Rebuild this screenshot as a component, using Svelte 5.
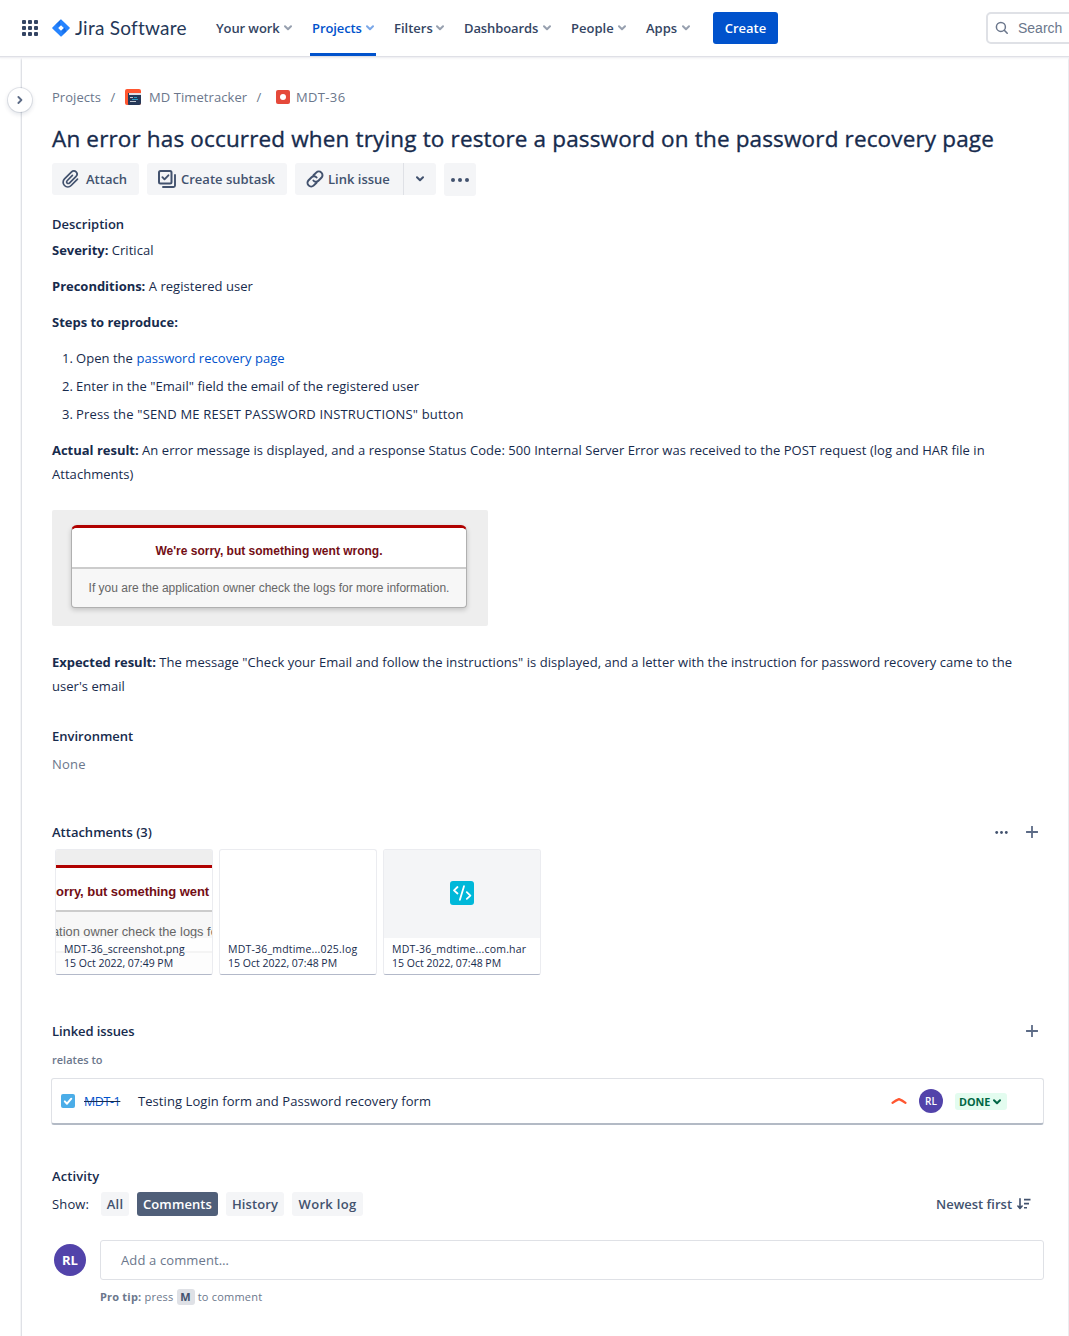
<script>
  const nav = [
    { label: 'Your work', key: 'work' },
    { label: 'Projects', key: 'projects', active: true },
    { label: 'Filters', key: 'filters' },
    { label: 'Dashboards', key: 'dash' },
    { label: 'People', key: 'people' },
    { label: 'Apps', key: 'apps' }
  ];
  const tabs = [
    { label: 'All', key: 'all' },
    { label: 'Comments', key: 'comments', selected: true },
    { label: 'History', key: 'history' },
    { label: 'Work log', key: 'worklog' }
  ];
  const files = [
    { name: 'MDT-36_screenshot.png', date: '15 Oct 2022, 07:49 PM', kind: 'image' },
    { name: 'MDT-36_mdtime...025.log', date: '15 Oct 2022, 07:48 PM', kind: 'log' },
    { name: 'MDT-36_mdtime...com.har', date: '15 Oct 2022, 07:48 PM', kind: 'har' }
  ];
  const dots = [0, 1, 2, 3, 4, 5, 6, 7, 8];
</script>

{#snippet chevron()}
  <svg class="chev" width="8" height="6" viewBox="0 0 8 6"><path d="M1 1.2 4 4.2 7 1.2" fill="none" stroke="currentColor" stroke-width="2" stroke-linecap="round" stroke-linejoin="round" /></svg>
{/snippet}

{#snippet plus()}
  <svg width="12" height="12" viewBox="0 0 12 12"><path d="M6 .5v11M.5 6h11" stroke="#5c6b86" stroke-width="1.8" stroke-linecap="round" /></svg>
{/snippet}

<div class="page">
  <header>
    <svg class="switcher" width="16" height="16" viewBox="0 0 16 16">
      {#each dots as d}
        <rect x={(d % 3) * 6} y={Math.floor(d / 3) * 6} width="4" height="4" rx="1" fill="#344563" />
      {/each}
    </svg>
    <div class="logo">
      <svg width="18" height="18" viewBox="0 0 18 18">
        <defs>
          <linearGradient id="ga" x1="1" y1="0" x2="0.4" y2="1"><stop offset="0" stop-color="#0052cc" /><stop offset="1" stop-color="#2684ff" /></linearGradient>
        </defs>
        <path d="M9 .2 17.4 8.3a1 1 0 0 1 0 1.4L9 17.8.6 9.7a1 1 0 0 1 0-1.4Z" fill="#2684ff" />
        <path d="M9 .2Q6.9 3.2 9 6.3L5.6 9.4 3.5 5.6Z" fill="url(#ga)" opacity=".75" />
        <path d="M9 17.8q2.1-3 0-6.1L12.4 8.6l2.1 3.8Z" fill="url(#ga)" opacity=".75" />
        <path d="M9 6.2 11.8 9 9 11.8 6.200 9Z" fill="#fff" />
      </svg>
      <span class="wordmark">Jira Software</span>
    </div>
    <nav>
      {#each nav as item}
        <a class="nav-item {item.key}" class:active={item.active}><span>{item.label}</span>{@render chevron()}</a>
      {/each}
    </nav>
    <button class="create">Create</button>
    <div class="search">
      <svg width="14" height="14" viewBox="0 0 14 14"><circle cx="5.9" cy="5.9" r="4.5" fill="none" stroke="#6b778c" stroke-width="1.5" /><path d="m9.300 9.300 2.900 2.900" stroke="#6b778c" stroke-width="1.6" stroke-linecap="round" /></svg>
      <span>Search</span>
    </div>
  </header>

  <div class="body">
    <aside>
      <button class="expand">
        <svg width="6" height="8" viewBox="0 0 6 8"><path d="M1.4 1 4.4 4 1.4 7" fill="none" stroke="#5c6b86" stroke-width="1.8" stroke-linecap="round" stroke-linejoin="round" /></svg>
      </button>
    </aside>
    <main>
      <div class="crumbs">
        <span class="c1">Projects</span><span class="slash">/</span>
        <svg class="project-icon" width="16" height="16" viewBox="0 0 16 16">
          <rect width="16" height="16" rx="2" fill="#ff5630" />
          <path d="M3 4h13v10a2 2 0 0 1-2 2H4a1 1 0 0 1-1-1Z" fill="#253858" />
          <path d="M4 4h12v2H4Z" fill="#dfe1e6" />
          <path d="M5 8.5h3M5 12.5h6" stroke="#c1c7d0" /><path d="M7 10.5h6M9 8.5h3" stroke="#2a9fc4" />
        </svg>
        <span class="c2">MD Timetracker</span><span class="slash s2">/</span>
        <svg class="bug" width="14" height="14" viewBox="0 0 14 14"><rect width="14" height="14" rx="2" fill="#e5493a" /><circle cx="7" cy="7" r="3" fill="#fff" /></svg>
        <span class="c3">MDT-36</span>
      </div>

      <h1>An error has occurred when trying to restore a password on the password recovery page</h1>

      <div class="actions">
        <button class="btn attach">
          <svg width="18" height="20" viewBox="0 0 18 20"><path d="M10.600 4.500 4.800 10.300C3.400 11.700 3.300 13.300 4.300 14.300s2.700.9 4-.4l6.900-6.900c1.100-1.100 1.200-2.500.3-3.400M12.100 7.700 7.500 12.300" fill="none" stroke="none" /><g transform="translate(9 10) rotate(45)" fill="none" stroke="#42526e" stroke-width="1.700" stroke-linecap="round"><path d="M4.700-4.500V4.500a4.700 4.700 0 0 1-9.400 0V-5.500a3.200 3.200 0 0 1 6.400 0V4a1.600 1.600 0 0 1-3.200 0V-3.500" /></g></svg>
          <span>Attach</span>
        </button>
        <button class="btn subtask">
          <svg width="18" height="18" viewBox="0 0 18 18"><rect x="1" y="1" width="12.5" height="12.5" rx="1.5" fill="none" stroke="#42526e" stroke-width="2" /><path d="m4.4 7.2 2.1 2.1 3.9-4M17 5v10.5a1.5 1.5 0 0 1-1.5 1.5H5" fill="none" stroke="#42526e" stroke-width="1.9" stroke-linecap="round" stroke-linejoin="round" /></svg>
          <span>Create subtask</span>
        </button>
        <div class="split">
          <button class="btn link">
            <svg width="18" height="18" viewBox="0 0 18 18"><g fill="none" stroke="#42526e" stroke-width="2" stroke-linecap="round"><path d="M7.5 5.3 10.2 2.6a3.6 3.6 0 0 1 5.2 5.2l-3 3c-1.5 1.5-3.8 1.3-5-.3" /><path d="M10.5 12.7 7.8 15.4a3.6 3.6 0 0 1-5.2-5.2l3-3c1.5-1.5 3.8-1.3 5 .3" /></g></svg>
            <span>Link issue</span>
          </button>
          <button class="btn caret">{@render chevron()}</button>
        </div>
        <button class="btn more">
          <svg width="18" height="4" viewBox="0 0 18 4"><g fill="#42526e"><circle cx="2" cy="2" r="2" /><circle cx="9" cy="2" r="2" /><circle cx="16" cy="2" r="2" /></g></svg>
        </button>
      </div>

      <h2 class="h-desc">Description</h2>
      <section class="description">
        <p><b>Severity:</b> Critical</p>
        <p><b>Preconditions:</b> A registered user</p>
        <p><b>Steps to reproduce:</b></p>
        <ol>
          <li><i>1.</i>Open the <a>password recovery page</a></li>
          <li><i>2.</i>Enter in the "Email" field the email of the registered user</li>
          <li class="caps"><i>3.</i>Press the "SEND ME RESET PASSWORD INSTRUCTIONS" button</li>
        </ol>
        <p><b>Actual result:</b> An error message is displayed, and a response Status Code: 500 Internal Server Error was received to the POST request (log and HAR file in<br />Attachments)</p>
        <figure>
          <div class="dialog">
            <div class="dialog-title"><span>We're sorry, but something went wrong.</span></div>
            <div class="dialog-text"><span>If you are the application owner check the logs for more information.</span></div>
          </div>
        </figure>
        <p><b>Expected result:</b> The message "Check your Email and follow the instructions" is displayed, and a letter with the instruction for password recovery came to the<br />user's email</p>
      </section>

      <h2 class="h-env">Environment</h2>
      <div class="none">None</div>

      <div class="section-head att-head">
        <h2>Attachments (3)</h2>
        <div class="tools">
          <svg width="13" height="3" viewBox="0 0 13 3"><g fill="#42526e"><circle cx="1.7" cy="1.5" r="1.4" /><circle cx="6.5" cy="1.5" r="1.4" /><circle cx="11.3" cy="1.5" r="1.4" /></g></svg>
          {@render plus()}
        </div>
      </div>
      <div class="files">
        {#each files as f}
          <div class="file {f.kind}">
            {#if f.kind === 'image'}
              <div class="thumb">
                <div class="thumb-title">orry, but something went</div>
                <div class="thumb-text">ation owner check the logs fo</div>
              </div>
            {:else if f.kind === 'har'}
              <div class="code">
                <svg width="24" height="24" viewBox="0 0 24 24"><rect width="24" height="24" rx="3" fill="#00b8d9" /><path d="M7.500 6 4 9.300l3.500 3.200M16.800 11.200l3.600 3.400-3.600 3.200M14 5.200 9.900 18.800" fill="none" stroke="#fff" stroke-width="1.8" stroke-linecap="round" stroke-linejoin="round" /></svg>
              </div>
            {/if}
            <div class="caption"><div class="name">{f.name}</div><div class="date">{f.date}</div></div>
          </div>
        {/each}
      </div>

      <div class="section-head link-head">
        <h2>Linked issues</h2>
        <div class="tools">{@render plus()}</div>
      </div>
      <div class="relates">relates to</div>
      <div class="issue">
        <svg width="14" height="14" viewBox="0 0 14 14"><rect width="14" height="14" rx="2" fill="#4bade8" /><path d="m3.800 7.400 2.200 2.300 4.300-5" fill="none" stroke="#fff" stroke-width="2" stroke-linecap="round" stroke-linejoin="round" /></svg>
        <span class="key">MDT-1</span>
        <span class="summary">Testing Login form and Password recovery form</span>
        <svg class="prio" width="16" height="8" viewBox="0 0 16 8"><path d="M1.500 5.900Q5 3.200 8 2.100q3 1.100 6.500 3.800" fill="none" stroke="#ff5630" stroke-width="2.200" stroke-linecap="round" stroke-linejoin="round" /></svg>
        <span class="avatar small">RL</span>
        <span class="status"><span>DONE</span>{@render chevron()}</span>
      </div>

      <h2 class="h-act">Activity</h2>
      <div class="show">
        <span class="label">Show:</span>
        {#each tabs as t}
          <button class="tab {t.key}" class:selected={t.selected}>{t.label}</button>
        {/each}
        <div class="sort">
          <span>Newest first</span>
          <svg width="14" height="12" viewBox="0 0 14 12"><path d="M3 .8v9.400M.9 8 3 10.400 5.100 8" fill="none" stroke="#42526e" stroke-width="1.600" stroke-linecap="round" stroke-linejoin="round" /><path d="M7 1.600h6.500M7 5.600h5M7 9.800h3" stroke="#42526e" stroke-width="1.600" /></svg>
        </div>
      </div>
      <div class="comment">
        <span class="avatar">RL</span>
        <div class="field"><span>Add a comment…</span></div>
      </div>
      <div class="tip"><b>Pro tip:</b> press <kbd>M</kbd> to comment</div>
    </main>
  </div>
</div>

<style>
  :global(body) { margin: 0; background: #fff; overflow: hidden; }
  .page {
    width: 1069px; height: 1336px; overflow: hidden; background: #fff;
    display: flex; flex-direction: column;
    font-family: "Open Sans", "Noto Sans", sans-serif; font-size: 13px; color: #172b4d;
  }
  .page * { box-sizing: border-box; }
  svg { display: block; flex: none; }
  button { font: inherit; border: 0; padding: 0; margin: 0; color: inherit; }
  span, h1, h2 { white-space: nowrap; }

  header {
    height: 56px; flex: none; display: flex; align-items: center; padding-left: 22px;
    box-shadow: 0 1px 0 #dfe0e6, 0 2px 1px #f0f0f4, 0 3px 2px #f8f8fa; position: relative; z-index: 1;
  }
  .logo { display: flex; align-items: center; margin-left: 14px; width: 158px; flex: none; }
  .wordmark { font-family: Lato, sans-serif; font-size: 19px; line-height: 24px; color: #253858; margin: -1px 0 0 5px; letter-spacing: .25px; }
  nav { display: flex; height: 56px; gap: 16px; width: 503px; flex: none; padding-left: 4px; }
  .nav-item { height: 56px; display: flex; align-items: center; justify-content: space-between; padding: 0 2px; font-weight: 600; color: #344563; border-bottom: 3px solid transparent; border-top: 3px solid transparent; flex: none; }
  .nav-item .chev { color: #97a0af; }
  .nav-item.active { color: #0052cc; border-bottom-color: #0052cc; }
  .active .chev { color: #7aa7e8; }
  .work { width: 80px; letter-spacing: -.1px; }
  .projects { width: 66px; letter-spacing: -.1px; }
  .filters { width: 54px; }
  .dash { width: 91px; letter-spacing: -.1px; }
  .people { width: 59px; }
  .apps { width: 48px; }
  .create { width: 65px; height: 32px; border-radius: 3px; background: #0052cc; color: #fff; font-weight: 600; flex: none; }
  .search { margin-left: 208px; width: 160px; height: 32px; flex: none; border: 2px solid #dfe1e6; border-radius: 5px; display: flex; align-items: center; padding-left: 7px; gap: 9px; font-family: "Liberation Sans", sans-serif; font-size: 14px; color: #6b778c; }

  .body { flex: 1; display: flex; }
  aside { width: 22px; border-right: 1px solid #dfe1e6; box-shadow: inset -1px 0 0 #f4f5f7; padding: 32px 0 0 8px; flex: none; }
  .expand { width: 24px; height: 24px; border-radius: 50%; background: #fff; box-shadow: 0 0 0 1px rgba(9,30,66,.1), 0 2px 4px 1px rgba(9,30,66,.1); display: flex; align-items: center; justify-content: center; position: relative; }
  main { width: 1047px; flex: none; padding: 30px 24px 0 30px; border-right: 1px solid #ebecf0; display: flex; flex-direction: column; }

  .crumbs { display: flex; align-items: center; height: 22px; color: #6b778c; }
  .slash { margin: 0 9px; width: 6px; text-align: center; }
  .c1 { width: 49px; letter-spacing: .05px; }
  .c2 { width: 99px; margin-left: 8px; letter-spacing: .08px; }
  .s2 { margin-right: 14px; margin-left: 8px; }
  .c3 { margin-left: 6px; letter-spacing: .35px; }

  h1 { margin: 17px 0 0; height: 28px; line-height: 28px; font-size: 22.5px; font-weight: 400; letter-spacing: .155px; -webkit-text-stroke: .35px #172b4d; }
  .actions { display: flex; gap: 8px; margin-top: 10px; height: 33px; }
  .btn { height: 32px; background: #f4f5f7; border-radius: 3px; display: flex; align-items: center; color: #42526e; font-weight: 600; }
  .attach { width: 87px; padding-left: 10px; gap: 6px; }
  .subtask { width: 140px; padding-left: 11px; gap: 5px; }
  .link { width: 108px; padding-left: 11px; gap: 4px; border-radius: 3px 0 0 3px; }
  .split { display: flex; gap: 1px; background: linear-gradient(#dfe1e6, #dfe1e6) 108px 0 / 1px 32px no-repeat; }
  .caret { width: 32px; justify-content: center; border-radius: 0 3px 3px 0; }
  .more { width: 32px; height: 33px; justify-content: center; }

  h2 { margin: 0; font-size: 13px; line-height: 20px; height: 20px; font-weight: 600; }
  .h-desc { margin-top: 18px; }
  .description { margin-top: 4px; letter-spacing: .042px; }
  p { margin: 0 0 12px; line-height: 24px; white-space: nowrap; }
  b { font-weight: 700; letter-spacing: -.02px; }
  ol { margin: 0 0 12px; padding: 0 0 0 10px; list-style: none; }
  li { height: 24px; line-height: 24px; margin-bottom: 4px; display: flex; white-space: pre; }
  li:last-child { margin: 0; }
  li i { font-style: normal; width: 14px; letter-spacing: 0; }
  li a { color: #0052cc; }
  .caps { letter-spacing: .18px; }
  figure { margin: 24px 0; width: 436px; height: 116px; background: #eee; border-radius: 2px; padding: 15px 21px 0 19px; font-family: "Liberation Sans", sans-serif; font-size: 12px; letter-spacing: 0; }
  .dialog { height: 83px; border: 1px solid #b0b0b0; border-top: 3px solid #b00100; border-radius: 6px 6px 4px 4px; background: #f7f7f7; box-shadow: 0 2px 5px rgba(0,0,0,.18); overflow: hidden; }
  .dialog-title { height: 41px; background: #fff; border-bottom: 2px solid #ccc; color: #730e15; font-weight: 700; display: flex; align-items: center; justify-content: center; padding-top: 6px; }
  .dialog-text { height: 37px; color: #666; display: flex; align-items: center; justify-content: center; }

  .h-env { margin-top: 16px; }
  .none { margin-top: 8px; line-height: 20px; color: #6b778c; letter-spacing: .2px; }
  .section-head { display: flex; justify-content: space-between; height: 20px; padding-right: 6px; }
  .att-head { margin-top: 48px; }
  .link-head h2 { letter-spacing: -.1px; }
  .tools { display: flex; align-items: center; gap: 18px; }
  .files { display: flex; gap: 6px; margin: 7px 0 0 3px; }
  .file { width: 158px; height: 126px; border-radius: 3px; border: 1px solid #ebecf0; border-bottom-color: #b3b9c9; display: flex; flex-direction: column; justify-content: flex-end; overflow: hidden; position: relative; background: #fff; }
  .thumb { position: absolute; inset: 0; background: #eee; padding-top: 15px; font-family: "Liberation Sans", sans-serif; }
  .thumb-title { height: 47px; border-top: 3px solid #b00100; border-bottom: 2px solid #ccc; background: #fff; color: #730e15; font-weight: 700; font-size: 13px; line-height: 48px; letter-spacing: -.05px; white-space: nowrap; }
  .thumb-text { height: 41px; background: #f7f7f7; color: #666; font-size: 12.800px; line-height: 40px; white-space: nowrap; border-bottom: 2px solid #bbb; text-indent: -4px; overflow: hidden; }
  .code { height: 88px; padding-bottom: 2px; background: #f4f5f7; display: flex; align-items: center; justify-content: center; }
  .caption { height: 36px; position: relative; background: rgba(255,255,255,.84); padding: 4px 8px 0; font-size: 10.5px; line-height: 14px; white-space: nowrap; }
  .name { letter-spacing: .2px; }
  .image .name { letter-spacing: .12px; }

  .link-head { margin-top: 46px; }
  .relates { margin-top: 11px; height: 16px; line-height: 16px; font-size: 11px; font-weight: 600; color: #6b778c; }
  .issue { margin: 10px 0 0 -1px; width: 993px; height: 47px; border: 1px solid #dfe1e6; border-bottom: 2px solid #b3bac5; border-radius: 3px; display: flex; align-items: center; padding-left: 9px; }
  .key { margin-left: 9px; width: 54px; color: #0052cc; text-decoration: line-through; text-decoration-color: #172b4d; font-size: 12.500px; letter-spacing: -.4px; }
  .summary { width: 753px; letter-spacing: .07px; }
  .avatar { width: 32px; height: 32px; border-radius: 50%; background: #5243aa; color: #fff; font-weight: 700; display: flex; align-items: center; justify-content: center; flex: none; }
  .avatar.small { width: 24px; height: 24px; font-size: 10px; font-weight: 600; margin-left: 12px; }
  .status { margin-left: 12px; width: 52px; height: 17px; background: #e3fcef; border-radius: 3px; color: #006644; font-weight: 700; font-size: 10.800px; display: flex; align-items: center; padding: 1px 6px 0 4px; justify-content: space-between; }

  .h-act { margin-top: 41px; letter-spacing: .1px; }
  .show { display: flex; align-items: center; height: 24px; margin-top: 6px; }
  .label { width: 49px; letter-spacing: .15px; }
  .tab { height: 24px; border-radius: 3px; background: #f4f5f7; color: #42526e; font-weight: 600; margin-right: 8px; text-align: center; white-space: nowrap; }
  .tab.selected { background: #505f79; color: #fff; }
  .all { width: 28px; letter-spacing: .2px; }
  .comments { width: 81px; letter-spacing: .1px; }
  .history { width: 58px; letter-spacing: .1px; }
  .worklog { width: 71px; letter-spacing: .3px; }
  .sort { margin-left: auto; margin-right: 13px; width: 95px; display: flex; align-items: center; justify-content: space-between; color: #42526e; font-weight: 600; }
  .comment { display: flex; align-items: center; margin-top: 24px; height: 40px; padding-left: 2px; gap: 14px; }
  .field { width: 944px; height: 40px; border: 1px solid #dfe1e6; border-radius: 3px; display: flex; align-items: center; padding-left: 20px; color: #6b778c; letter-spacing: .13px; }
  .tip { margin: 8px 0 0 48px; height: 18px; line-height: 18px; font-size: 11px; color: #6b778c; white-space: nowrap; letter-spacing: .22px; }
  .tip b { letter-spacing: .2px; }
  kbd { font: inherit; font-weight: 700; color: #42526e; background: #dfe1e6; border-radius: 3px; display: inline-block; width: 18px; height: 16px; line-height: 16px; text-align: center; }
</style>
